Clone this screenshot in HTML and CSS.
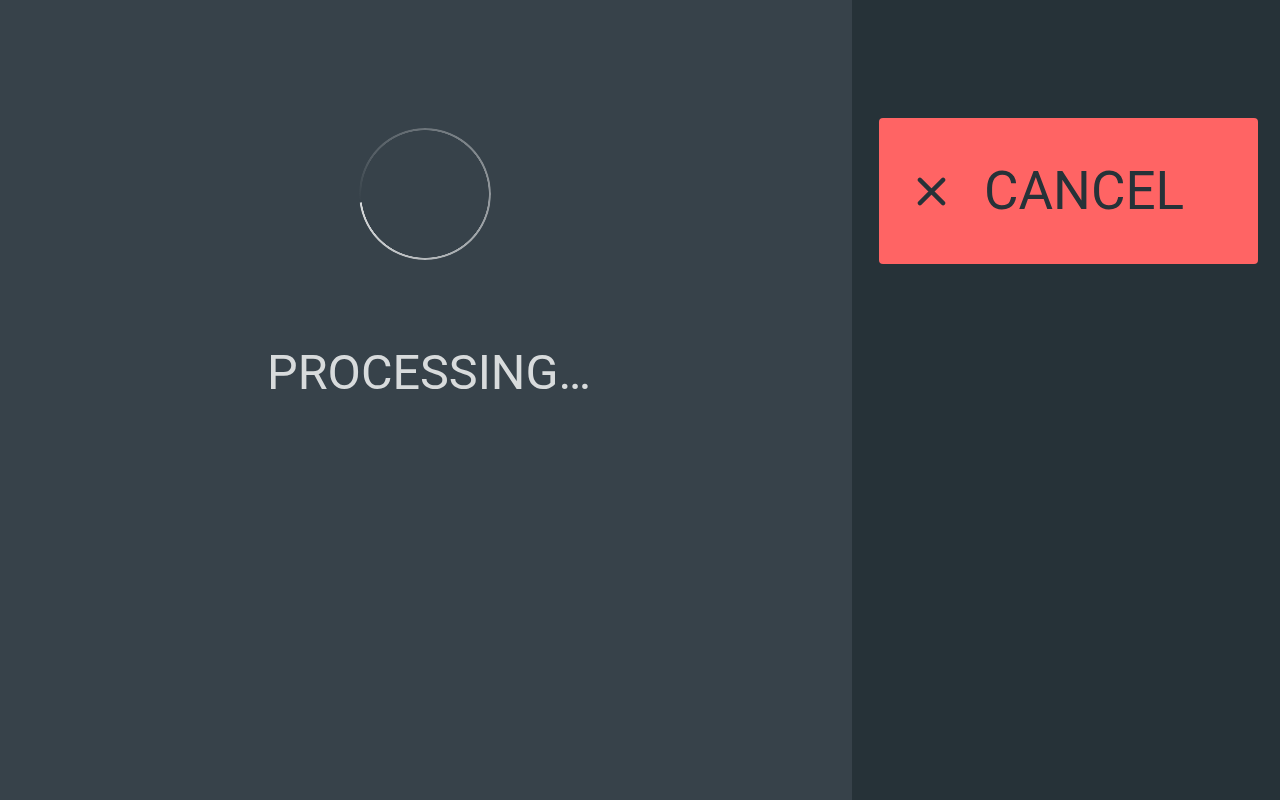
FILE: index.html
```html
<!DOCTYPE html>
<html lang="en">
<head>
  <meta charset="UTF-8" />
  <title>Processing</title>
  <link rel="stylesheet" href="styles.css">
</head>
<body>
  <main class="status">
    <div class="spinner"></div>
    <p class="status-text">PROCESSING…</p>
  </main>
  <aside class="actions">
    <button class="btn-cancel" type="button">
      <svg class="icon" viewBox="0 0 30 30" aria-hidden="true">
        <path d="M3 3 L27 27 M27 3 L3 27" />
      </svg>
      <span>CANCEL</span>
    </button>
  </aside>
</body>
</html>
```

FILE: styles.css
```css
* { box-sizing: border-box; }
html, body { height: 100%; }
body {
  margin: 0;
  display: flex;
  font-family: Roboto, "Liberation Sans", sans-serif;
  background: #263238;
}

/* left: progress */
.status {
  width: 852px;
  flex: none;
  background: #37424a;
  display: flex;
  flex-direction: column;
  align-items: center;
  padding-top: 128px;
}
.spinner {
  width: 132px;
  height: 132px;
  margin-left: -2px;
  border-radius: 50%;
  background: conic-gradient(from 263deg,
    rgba(255,255,255,0) 0deg,
    rgba(255,255,255,0.14) 40deg,
    rgba(255,255,255,0.32) 120deg,
    rgba(255,255,255,0.52) 220deg,
    rgba(255,255,255,0.8) 359deg,
    rgba(255,255,255,0) 360deg);
  -webkit-mask: radial-gradient(circle, transparent 63.5px, #000 64px);
  mask: radial-gradient(circle, transparent 63.5px, #000 64px);
}
.status-text {
  margin: 85px 0 0 6px;
  font-size: 48.5px;
  line-height: 56px;
  color: #d8dbdc;
}

/* right: actions */
.actions {
  flex: 1;
  padding: 118px 22px 0 27px;
}
.btn-cancel {
  width: 100%;
  height: 146px;
  border: 0;
  border-radius: 4px;
  background: #ff6464;
  color: #263238;
  font-family: inherit;
  font-size: 53px;
  display: flex;
  align-items: center;
  gap: 38px;
  padding: 0 0 0 38px;
  cursor: pointer;
}
.btn-cancel .icon {
  width: 29px;
  height: 29px;
  fill: none;
  stroke: #263238;
  stroke-width: 4.5;
  stroke-linecap: round;
}
```
